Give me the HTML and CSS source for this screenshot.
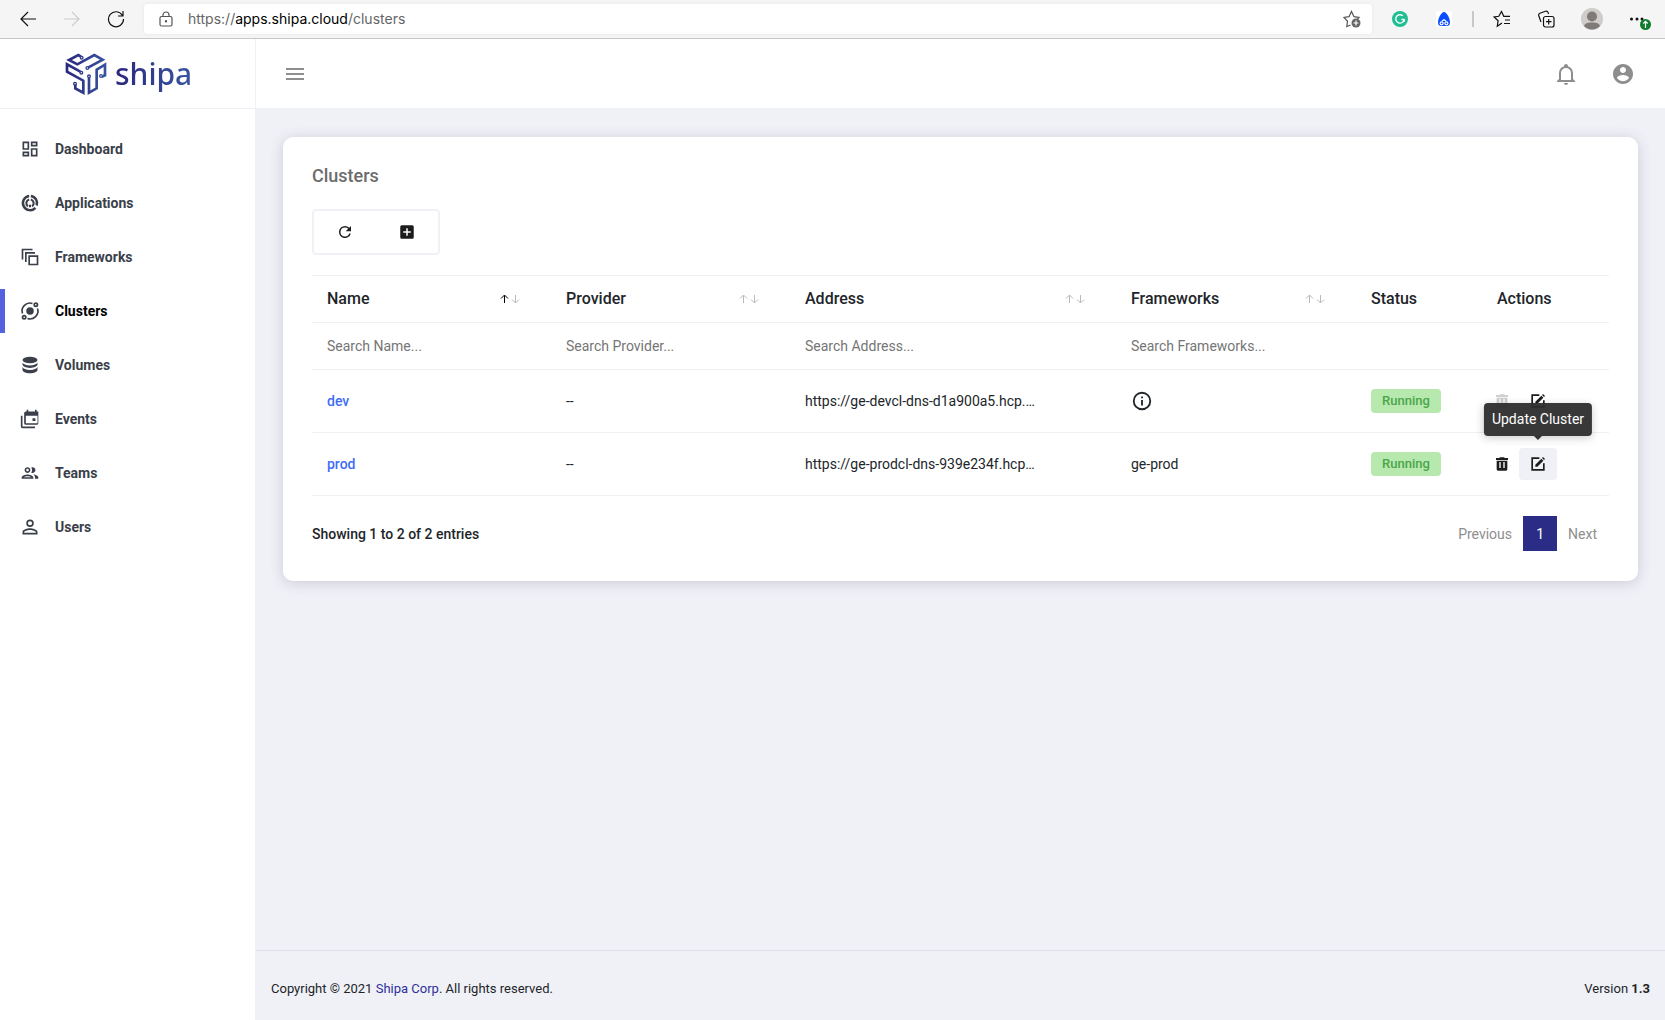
FILE: index.html
```html
<!DOCTYPE html>
<html lang="en">
<head>
<meta charset="utf-8">
<title>Clusters - Shipa</title>
<link rel="stylesheet" href="styles.css">
</head>
<body>
<div class="browser">
  <button class="tool tool-nav" aria-label="Back"><svg width="16" height="16" viewBox="0 0 16 16"><path d="M8 1L1 8l7 7M1 8h15"/></svg></button>
  <button class="tool tool-nav" aria-label="Forward" disabled><svg width="16" height="16" viewBox="0 0 16 16"><path d="M8 1l7 7-7 7M15 8H0"/></svg></button>
  <button class="tool tool-nav" aria-label="Reload"><svg width="18" height="18" viewBox="0 0 18 18"><path d="M15.500 5.500A7.500 7.500 0 1 0 16.500 9M16 1v5h-5"/></svg></button>
  <div class="address">
    <svg class="lock" width="14" height="16" viewBox="0 0 14 16"><rect x="1" y="5.500" width="12" height="9.500" rx="1.500"/><path d="M4 5.500V4a3 3 0 0 1 6 0v1.500"/><circle cx="7" cy="10.200" r=".6"/></svg>
    <div class="url">https://<b>apps.shipa.cloud</b>/clusters</div>
    <button class="tool fav" aria-label="Add to favorites"><svg width="18" height="18" viewBox="0 0 18 18"><path d="M7.500 15L3.800 16.500l.7-5.200L1 7.500l5-.8L8.500 1.500l2.500 5.200 5 .8-1.500 1.500"/><circle cx="13" cy="13" r="4.500" fill="#666" stroke="none"/><path stroke="#fff" d="M13 10.500v5M10.500 13h5"/></svg></button>
  </div>
  <div class="extensions">
    <button class="tool" aria-label="Grammarly"><svg width="16" height="16" viewBox="0 0 16 16"><circle cx="8" cy="8" r="8" fill="#1fbf92" stroke="none"/><path stroke="#fff" stroke-width="1.400" d="M10.800 4.800a4.200 4.200 0 1 0 1.300 3.700H9.500M12.100 8.500v2.600"/></svg></button>
    <button class="tool" aria-label="Extension"><svg width="16" height="16" viewBox="0 0 16 16"><path fill="#fff" stroke="none" d="M0 0h16v16H0z"/><path fill="#0a4dff" stroke="none" d="M8 1c2.500 0 6 6 6 10.500 0 2-1 3.500-3 3.500H5c-2 0-3-1.500-3-3.500C2 7 5.500 1 8 1z"/><g stroke="#fff" stroke-width="1.200"><circle cx="5.600" cy="12.300" r="1.500"/><circle cx="10.400" cy="12.300" r="1.500"/><path d="M6 10l2-1.200 2 1.200"/></g></svg></button>
    <span class="divider"></span>
    <button class="tool" aria-label="Favorites"><svg width="18" height="18" viewBox="0 0 18 18"><path d="M9 13l-4.700 3.200.8-5.500L1.200 7l4.600-.7L8.500 1.500l2.300 4.800H17M12 10h5M11 13.500h6"/></svg></button>
    <button class="tool" aria-label="Collections"><svg width="18" height="18" viewBox="0 0 18 18"><rect x="6.500" y="6.500" width="10.500" height="10.500" rx="2"/><path d="M11.700 9v5.500M9 11.700h5.500M4 12L1.700 5.500a2 2 0 0 1 1.200-2.300l5.600-2a2 2 0 0 1 2.500 1.200l.6 1.600"/></svg></button>
    <button class="tool tool-wide" aria-label="Profile"><svg width="22" height="22" viewBox="0 0 22 22"><circle cx="11" cy="11" r="11" fill="#cfccc9" stroke="none"/><circle cx="11" cy="8.500" r="5" fill="#7f7a77" stroke="none"/><path fill="#7f7a77" stroke="none" d="M3 18c1-3 4-3.500 8-3.500s7 .5 8 3.500a11 11 0 0 1-16 0z"/></svg></button>
    <button class="tool tool-wide" aria-label="Settings and more"><svg width="22" height="22" viewBox="0 0 22 22"><g fill="#111" stroke="none"><circle cx="2.500" cy="11" r="1.500"/><circle cx="8" cy="11" r="1.500"/><circle cx="13" cy="11" r="1.500"/></g><circle cx="16.500" cy="16.500" r="5.500" fill="#107c2e" stroke="none"/><path stroke="#fff" d="M16.500 20v-6.500M14.300 15.500l2.200-2.200 2.200 2.200"/></svg></button>
  </div>
</div>

<div class="app">
  <aside class="sidebar">
    <a class="logo" href="#">
      <svg width="42" height="42" viewBox="0 0 126 126" aria-hidden="true">
        <defs><linearGradient id="brand" gradientUnits="userSpaceOnUse" x1="0" y1="0" x2="126" y2="0"><stop offset="0" stop-color="#29277f"/><stop offset="1" stop-color="#3a55a0"/></linearGradient></defs>
        <g fill="none" stroke="url(#brand)" stroke-width="8">
          <path d="M48 11L40 6 12 21l25 13L88 6l25 14-44 24"/>
          <path d="M46 56L6 34v22l49 27v36L31 106V96"/>
          <path d="M72 74v45l23-13V50l25-15v32l-10 4"/>
          <g stroke-width="4" fill="#fff"><circle cx="50" cy="14" r="4"/><circle cx="67" cy="45" r="4"/><circle cx="49" cy="59" r="4"/><circle cx="30" cy="92" r="4"/><circle cx="72" cy="70" r="4"/><circle cx="108" cy="69" r="4"/></g>
        </g>
      </svg>
      <span class="wordmark">shipa</span>
    </a>
    <nav class="nav">
      <a href="#"><svg viewBox="0 0 24 24"><path d="M19 5v2h-4V5h4M9 5v6H5V5h4m10 8v6h-4v-6h4M9 17v2H5v-2h4M21 3h-8v6h8V3zM11 3H3v10h8V3zm10 8h-8v10h8V11zm-10 4H3v6h8v-6z"/></svg>Dashboard</a>
      <a href="#"><svg viewBox="0 0 24 24"><g fill="none" stroke="currentColor"><path stroke-width="3" d="M11 3.500A8.600 8.600 0 1 0 18.500 17.800M13 3.500a8.600 8.600 0 0 1 7 11.500"/><path stroke-width="2.500" d="M11 7.700a4.700 4.700 0 0 0-1.500 8.300M13 7.700a4.700 4.700 0 0 1 1.500 8.300M12 14v3"/></g></svg>Applications</a>
      <a href="#"><svg viewBox="0 0 24 24"><path d="M2 2h13v2H4v11H2zM6 6h12v2H8v10H6zM10 10h12v12H10zM12 12v8h8v-8z" fill-rule="evenodd"/></svg>Frameworks</a>
      <a href="#" class="active" aria-current="page"><svg viewBox="0 0 24 24"><circle cx="12" cy="12" r="4.500"/><g fill="none" stroke="currentColor" stroke-width="2"><path d="M15 3A9.500 9.500 0 0 0 3 15M9 21A9.500 9.500 0 0 0 21 9"/><circle cx="19" cy="4.500" r="2"/><circle cx="5" cy="19.500" r="2"/></g></svg>Clusters</a>
      <a href="#"><svg viewBox="0 0 24 24"><ellipse cx="12" cy="6" rx="9" ry="4"/><path d="M3 9c1 2 4 3.500 9 3.500S20 11 21 9v2.500c0 2-4 4-9 4s-9-2-9-4zM3 14.500c1 2 4 3.500 9 3.500s8-1.500 9-3.500V18c0 2-4 4-9 4s-9-2-9-4z"/></svg>Volumes</a>
      <a href="#"><svg viewBox="0 0 24 24"><path fill-rule="evenodd" d="M22 3v14a2 2 0 0 1-2 2H7a2 2 0 0 1-2-2V5a2 2 0 0 1 2-2h1V1h2v2h8V1h2v2zM7 8v9h14V8zM15 11h3.500v3.500H15zM1 8h2v13h15v2H3a2 2 0 0 1-2-2z"/></svg>Events</a>
      <a href="#"><svg viewBox="0 0 24 24"><path d="M9 13.750c-2.340 0-7 1.170-7 3.500V19h14v-1.750c0-2.330-4.660-3.500-7-3.500zM4.340 17c.84-.58 2.870-1.250 4.660-1.250s3.820.67 4.660 1.250H4.340zM9 12c1.930 0 3.500-1.570 3.500-3.500S10.930 5 9 5 5.500 6.570 5.500 8.500 7.070 12 9 12zm0-5c.83 0 1.500.67 1.500 1.500S9.830 10 9 10s-1.500-.67-1.500-1.500S8.170 7 9 7zm7.040 6.810c1.160.84 1.960 1.960 1.960 3.440V19h4v-1.750c0-2.020-3.500-3.170-5.960-3.440zM15 12c1.930 0 3.500-1.570 3.500-3.500S16.930 5 15 5c-.54 0-1.040.13-1.500.35.63.89 1 1.980 1 3.150s-.37 2.260-1 3.150c.46.22.96.35 1.500.35z"/></svg>Teams</a>
      <a href="#"><svg viewBox="0 0 24 24"><path d="M12 3a4.500 4.500 0 1 1 0 9 4.500 4.500 0 0 1 0-9m0 2a2.500 2.500 0 1 0 0 5 2.500 2.500 0 0 0 0-5m0 8.500c3 0 9 1.500 9 4.500v3H3v-3c0-3 6-4.500 9-4.500m0 2c-3 0-7 1.500-7 2.500v1h14v-1c0-1-4-2.500-7-2.500z"/></svg>Users</a>
    </nav>
  </aside>

  <div class="page">
    <header class="topbar">
      <button class="icon-button" aria-label="Toggle menu"><svg viewBox="0 0 24 24"><path d="M3 6h18v2H3V6m0 5h18v2H3v-2m0 5h18v2H3v-2z"/></svg></button>
      <div class="topbar-right">
        <button class="icon-button" aria-label="Notifications"><svg viewBox="0 0 24 24"><path d="M10 21h4a2 2 0 0 1-4 0m11-2v1H3v-1l2-2v-6c0-3.100 2.030-5.830 5-6.710V4a2 2 0 0 1 4 0v.290c2.970.880 5 3.610 5 6.710v6l2 2m-4-8a5 5 0 0 0-10 0v7h10z"/></svg></button>
        <button class="icon-button" aria-label="Account"><svg viewBox="0 0 24 24"><path d="M12 2C6.480 2 2 6.480 2 12s4.480 10 10 10 10-4.480 10-10S17.520 2 12 2zm0 3c1.660 0 3 1.340 3 3s-1.340 3-3 3-3-1.340-3-3 1.340-3 3-3zm0 14.200c-2.500 0-4.710-1.280-6-3.220.03-1.990 4-3.080 6-3.080s5.970 1.090 6 3.080c-1.290 1.940-3.500 3.220-6 3.220z"/></svg></button>
      </div>
    </header>

    <main class="content">
      <section class="card">
        <h1>Clusters</h1>
        <div class="toolbar">
          <button aria-label="Refresh"><svg viewBox="0 0 24 24"><path d="M17.650 6.350A7.950 7.950 0 0 0 12 4a8 8 0 1 0 7.730 10h-2.080A6 6 0 1 1 12 6c1.660 0 3.140.69 4.220 1.780L13 11h7V4l-2.350 2.350z"/></svg></button>
          <button aria-label="Add cluster"><svg viewBox="0 0 24 24"><path d="M17 13h-4v4h-2v-4H7v-2h4V7h2v4h4m2-8H5a2 2 0 0 0-2 2v14a2 2 0 0 0 2 2h14a2 2 0 0 0 2-2V5a2 2 0 0 0-2-2z"/></svg></button>
        </div>
        <table class="clusters">
          <colgroup><col class="c-name"><col class="c-provider"><col><col class="c-frameworks"><col class="c-status"><col class="c-actions"></colgroup>
          <thead>
            <tr>
              <th aria-sort="ascending"><div class="head">Name<svg class="sort" viewBox="0 0 20 10"><path class="on" d="M4.500 9V1.500M1 4.500l3.500-3.500L8 4.500"/><path d="M15.500 1v7.500M12 5.500L15.500 9 19 5.500"/></svg></div></th>
              <th><div class="head">Provider<svg class="sort" viewBox="0 0 20 10"><path d="M4.500 9V1.500M1 4.500l3.500-3.500L8 4.500M15.500 1v7.500M12 5.500L15.500 9 19 5.500"/></svg></div></th>
              <th><div class="head">Address<svg class="sort" viewBox="0 0 20 10"><path d="M4.500 9V1.500M1 4.500l3.500-3.500L8 4.500M15.500 1v7.500M12 5.500L15.500 9 19 5.500"/></svg></div></th>
              <th><div class="head">Frameworks<svg class="sort" viewBox="0 0 20 10"><path d="M4.500 9V1.500M1 4.500l3.500-3.500L8 4.500M15.500 1v7.500M12 5.500L15.500 9 19 5.500"/></svg></div></th>
              <th>Status</th>
              <th>Actions</th>
            </tr>
            <tr class="filters">
              <td><input type="text" placeholder="Search Name..." aria-label="Search Name"></td>
              <td><input type="text" placeholder="Search Provider..." aria-label="Search Provider"></td>
              <td><input type="text" placeholder="Search Address..." aria-label="Search Address"></td>
              <td><input type="text" placeholder="Search Frameworks..." aria-label="Search Frameworks"></td>
              <td></td>
              <td></td>
            </tr>
          </thead>
          <tbody>
            <tr>
              <td><a href="#">dev</a></td>
              <td>--</td>
              <td>https://ge-devcl-dns-d1a900a5.hcp.…</td>
              <td><svg class="info" viewBox="0 0 24 24" role="img" aria-label="Info"><path d="M11 9h2V7h-2m1 13a8 8 0 1 1 0-16 8 8 0 0 1 0 16m0-18a10 10 0 1 0 0 20 10 10 0 0 0 0-20m-1 15h2v-6h-2v6z"/></svg></td>
              <td><span class="badge">Running</span></td>
              <td><div class="actions">
                <button disabled aria-label="Delete Cluster"><svg viewBox="0 0 24 24"><path fill-rule="evenodd" d="M3 3h5l1-1h6l1 1h5v3H3zM4 7h16v13a2 2 0 0 1-2 2H6a2 2 0 0 1-2-2zM8 9v9h2V9zM14 9v9h2V9z"/></svg></button>
                <button aria-label="Update Cluster"><svg viewBox="0 0 24 24"><path d="M2 2h12v2.500H4.500v15h15V11H22v11H2zM8 13l9-9 3 3-9 9H8zM18 3l1.500-1.500 3 3L21 6z"/></svg></button>
              </div></td>
            </tr>
            <tr>
              <td><a href="#">prod</a></td>
              <td>--</td>
              <td>https://ge-prodcl-dns-939e234f.hcp…</td>
              <td>ge-prod</td>
              <td><span class="badge">Running</span></td>
              <td><div class="actions">
                <button aria-label="Delete Cluster"><svg viewBox="0 0 24 24"><path fill-rule="evenodd" d="M3 3h5l1-1h6l1 1h5v3H3zM4 7h16v13a2 2 0 0 1-2 2H6a2 2 0 0 1-2-2zM8 9v9h2V9zM14 9v9h2V9z"/></svg></button>
                <button class="hovered" aria-label="Update Cluster"><svg viewBox="0 0 24 24"><path d="M2 2h12v2.500H4.500v15h15V11H22v11H2zM8 13l9-9 3 3-9 9H8zM18 3l1.500-1.500 3 3L21 6z"/></svg><span class="tooltip" role="tooltip">Update Cluster</span></button>
              </div></td>
            </tr>
          </tbody>
        </table>
        <div class="table-footer">
          <p>Showing 1 to 2 of 2 entries</p>
          <div class="pager">
            <button disabled>Previous</button>
            <button class="current">1</button>
            <button disabled>Next</button>
          </div>
        </div>
      </section>
    </main>

    <footer class="footer">
      <div>Copyright © 2021 <a href="#">Shipa Corp</a>. All rights reserved.</div>
      <div>Version <b>1.3</b></div>
    </footer>
  </div>
</div>
</body>
</html>
```
FILE: styles.css
```css
* { box-sizing: border-box; }
body {
  margin: 0;
  min-height: 100vh;
  display: flex;
  flex-direction: column;
  font: 14px/20px Roboto, sans-serif;
  color: #212529;
  background: #f0f1f7;
}
button { font: inherit; color: inherit; background: none; border: 0; padding: 0; }
svg { display: block; flex: none; fill: currentColor; }
a { text-decoration: none; }

/* Browser toolbar */
.browser {
  display: flex;
  align-items: center;
  height: 39px;
  padding: 0 1px 0 6px;
  background: #f5f5f5;
  border-bottom: 1px solid #c6c6c6;
}
.tool { display: flex; justify-content: center; align-items: center; width: 44px; color: #111; }
.tool-wide { width: 48px; }
.tool:disabled { color: #ccc; }
.tool svg, .lock { fill: none; stroke: currentColor; stroke-width: 1.2; }
.address {
  flex: 1;
  display: flex;
  align-items: center;
  height: 30px;
  margin-left: 6px;
  padding-left: 15px;
  background: #fff;
  border-radius: 4px;
  box-shadow: 0 0 4px rgba(0, 0, 0, .06);
}
.lock, .fav { color: #555; }
.fav { width: 40px; }
.url {
  flex: 1;
  margin-left: 15px;
  font: 14px/20px Inter, sans-serif;
  color: #666;
}
.url b { font-weight: 400; color: #000; }
.extensions { display: flex; align-items: center; margin-left: 6px; }
.divider { width: 2px; height: 16px; margin: 0 6px; background: #c8c8c8; }

/* Shell */
.app { flex: 1; display: flex; }
.sidebar { flex: none; width: 256px; background: #fff; border-right: 1px solid #f0f1f7; }
.logo {
  display: flex;
  align-items: center;
  gap: 8px;
  height: 70px;
  padding-left: 65px;
  border-bottom: 1px solid #f0f1f7;
}
.wordmark {
  font: 500 30px/40px "Noto Sans", sans-serif;
  color: transparent;
  background: linear-gradient(90deg, #29277f, #3a55a0);
  background-clip: text;
}
.nav { display: flex; flex-direction: column; gap: 10px; padding-top: 18px; }
.nav a {
  display: flex;
  align-items: center;
  gap: 15px;
  height: 44px;
  padding-left: 15px;
  border-left: 5px solid transparent;
  font-weight: 700;
  color: #3a3f4a;
}
.nav .active { border-color: #5562dd; color: #000; }
.nav svg { width: 20px; height: 20px; color: #3a3f4a; }

.page { flex: 1; min-width: 0; display: flex; flex-direction: column; }
.topbar {
  display: flex;
  justify-content: space-between;
  align-items: center;
  height: 69px;
  padding: 0 30px 0 27px;
  background: #fff;
}
.topbar-right { display: flex; gap: 33px; }
.icon-button { color: #8e8e8e; }
.icon-button svg { width: 24px; height: 24px; }

.content { flex: 1; padding: 29px 27px; }
.card {
  padding: 29px 29px 30px;
  background: #fff;
  border-radius: 10px;
  box-shadow: 0 2px 14px rgba(60, 50, 80, .2);
}
h1 { margin: 0 0 23px; font-size: 18px; line-height: 20px; font-weight: 500; color: #6c6c6c; }
.toolbar {
  display: flex;
  width: 128px;
  height: 46px;
  margin-bottom: 20px;
  border: 2px solid #f0f1f7;
  border-radius: 4px;
}
.toolbar button { flex: 1; display: flex; justify-content: center; align-items: center; color: #1c1c1c; }
.toolbar svg { width: 18px; height: 18px; }

/* Table */
.clusters { width: 100%; table-layout: fixed; border-collapse: collapse; }
.c-name, .c-provider { width: 239px; }
.c-frameworks { width: 240px; }
.c-status { width: 126px; }
.c-actions { width: 127px; }
.clusters tr { height: 63px; border-bottom: 1px solid #eff0f4; }
.clusters thead tr { height: 47px; border-top: 1px solid #eff0f4; }
th, td { padding: 0 15px; text-align: left; }
th { font-size: 16px; font-weight: 500; }
.head { display: flex; justify-content: space-between; align-items: center; }
.sort { width: 20px; height: 10px; margin-right: 16px; fill: none; stroke: #b9b9b9; }
.sort .on { stroke: #000; }
.filters input {
  display: block;
  width: 100%;
  height: 20px;
  padding: 0;
  border: 0;
  font: inherit;
  background: none;
}
.filters input::placeholder { color: #757575; }
td a { font-weight: 500; color: #3f6df5; }
.info { width: 22px; height: 22px; }
.badge {
  display: block;
  width: 70px;
  border-radius: 4px;
  line-height: 24px;
  font-size: 13px;
  font-weight: 500;
  text-align: center;
  color: #4aa64a;
  background: #b7e8ae;
}
.actions { display: flex; gap: 0; margin-left: -14px; }
.actions button {
  position: relative;
  display: flex;
  justify-content: center;
  align-items: center;
  width: 38px;
  height: 32px;
  margin-right: -2px;
  border-radius: 4px;
  color: #1c1c1c;
}
.actions button:disabled { color: #cfcfcf; }
.actions svg { width: 16px; height: 16px; }
.actions .hovered { background: #f0f1f7; }
.tooltip {
  position: absolute;
  left: 50%;
  bottom: 44px;
  transform: translateX(-50%);
  padding: 6px 8px 7px;
  border-radius: 4px;
  white-space: nowrap;
  color: #fff;
  background: rgba(45, 45, 45, .95);
  box-shadow: 0 2px 8px rgba(0, 0, 0, .2);
}
.tooltip::after {
  content: "";
  position: absolute;
  top: 100%;
  left: 50%;
  margin-left: -4px;
  border: 4px solid transparent;
  border-top-color: #333;
  border-bottom: 0;
}

.table-footer { display: flex; justify-content: space-between; align-items: center; margin-top: 20px; }
.table-footer p { margin: 0; font-weight: 500; }
.pager { display: flex; align-items: center; gap: 11px; padding-right: 12px; color: #8e8e8e; }
.pager .current { width: 34px; height: 35px; color: #fff; background: #2a2c86; }

.footer {
  display: flex;
  justify-content: space-between;
  align-items: center;
  height: 70px;
  padding: 6px 15px 0;
  border-top: 1px solid #dcdfe5;
  font-size: 13px;
}
.footer a { color: #2f2f9c; }
```
